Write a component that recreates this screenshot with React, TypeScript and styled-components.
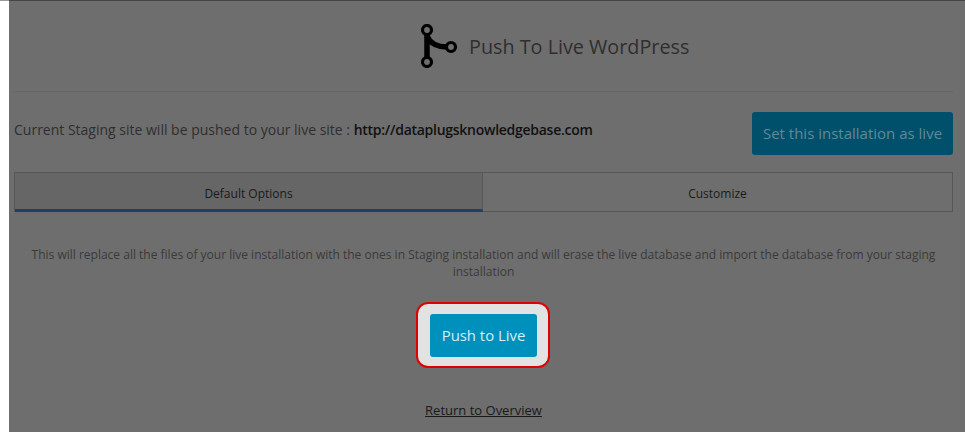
import styled, { createGlobalStyle } from 'styled-components';

const GlobalStyle = createGlobalStyle`
  html, body {
    margin: 0;
    padding: 0;
    height: 432px;
    overflow: hidden;
    background: #fff;
    font-family: 'Open Sans', 'Liberation Sans', sans-serif;
  }

  body {
    box-shadow: inset 0 1px 0 #999;
  }
`;

const Page = styled.div`
  box-sizing: border-box;
  height: 432px;
  margin-left: 9px;
  width: 956px;
  padding: 0 12px 0 5px;
  background: #6e6e6e;
  border-top: 1px solid #444;
  overflow: hidden;
`;

const Header = styled.div`
  display: flex;
  align-items: center;
  gap: 11px;
  height: 91px;
  padding-left: 406px;
  border-bottom: 1px solid #666;
  box-sizing: border-box;
  color: #2e2e2e;
  font-size: 19.8px;
`;

const Summary = styled.div`
  display: flex;
  justify-content: space-between;
  align-items: flex-start;
  height: 80px;
  padding-top: 20px;
  box-sizing: border-box;
`;

const SummaryText = styled.div`
  padding-top: 7px;
  font-size: 14px;
  line-height: 22px;
  color: #2f2f2f;

  strong {
    font-weight: 600;
    letter-spacing: -0.27px;
    color: #111;
  }
`;

const LiveButton = styled.button`
  height: 43px;
  width: 201px;
  padding: 0 0 2px;
  border: 0;
  border-radius: 3px;
  background: #00506c;
  color: #5f8a98;
  font-family: inherit;
  font-size: 15px;
`;

const Tabs = styled.div`
  display: grid;
  grid-template-columns: 468px 1fr;
  height: 40px;
  box-sizing: border-box;
  border: 1px solid #575757;
  border-bottom: 0;
`;

const Tab = styled.div<{ $active?: boolean }>`
  display: flex;
  justify-content: center;
  align-items: center;
  font-size: 12px;
  font-weight: 500;
  color: #1a1a1a;
  box-sizing: border-box;
  padding-top: ${({ $active }) => ($active ? '4px' : '2px')};
  background: ${({ $active }) => ($active ? '#666' : 'transparent')};
  border-bottom: ${({ $active }) => ($active ? '3px solid #1f3f66' : '1px solid #575757')};
  border-right: ${({ $active }) => ($active ? '1px solid #575757' : '0')};
`;

const Description = styled.p`
  margin: 34px 0 0;
  padding: 0 14px;
  text-align: center;
  font-size: 12px;
  line-height: 17px;
  color: #3a3a3a;
`;

const Highlight = styled.div`
  box-sizing: border-box;
  width: 134px;
  height: 66px;
  margin: 22px 0 0 402px;
  padding-left: 12px;
  display: flex;
  align-items: center;
  background: #e2e2e2;
  border: 2px solid #e00000;
  border-radius: 12px;
`;

const PushButton = styled.button`
  width: 107px;
  height: 43px;
  padding: 0;
  border: 0;
  border-radius: 3px;
  background: #0090bc;
  color: #d6eef5;
  font-family: inherit;
  font-size: 14.9px;
`;

const Footer = styled.div`
  margin-top: 33px;
  text-align: center;
  font-size: 13px;
  line-height: 18px;
`;

const BackLink = styled.a`
  color: #1a1a1a;
  font-weight: 500;
  text-decoration: underline;
`;

function BranchIcon() {
  return (
    <svg width="38" height="44" viewBox="0 0 38 44" fill="none" stroke="#000">
      <circle cx="7" cy="6" r="4.5" strokeWidth="3.2" />
      <circle cx="7" cy="38" r="4.5" strokeWidth="3.2" />
      <circle cx="31" cy="23" r="4.5" strokeWidth="3.2" />
      <path d="M7 10V34" strokeWidth="5.5" />
      <path d="M7 12C10 20 19 23 27 23" strokeWidth="5.5" />
    </svg>
  );
}

export default function App() {
  return (
    <>
      <GlobalStyle />
      <Page>
        <Header>
          <BranchIcon />
          <span>Push To Live WordPress</span>
        </Header>
        <Summary>
          <SummaryText>
            Current Staging site will be pushed to your live site : <strong>http://dataplugsknowledgebase.com</strong>
          </SummaryText>
          <LiveButton>Set this installation as live</LiveButton>
        </Summary>
        <Tabs>
          <Tab $active>Default Options</Tab>
          <Tab>Customize</Tab>
        </Tabs>
        <Description>
          This will replace all the files of your live installation with the ones in Staging installation and will erase the live database and import the database from your staging installation
        </Description>
        <Highlight>
          <PushButton>Push to Live</PushButton>
        </Highlight>
        <Footer>
          <BackLink href="#">Return to Overview</BackLink>
        </Footer>
      </Page>
    </>
  );
}
